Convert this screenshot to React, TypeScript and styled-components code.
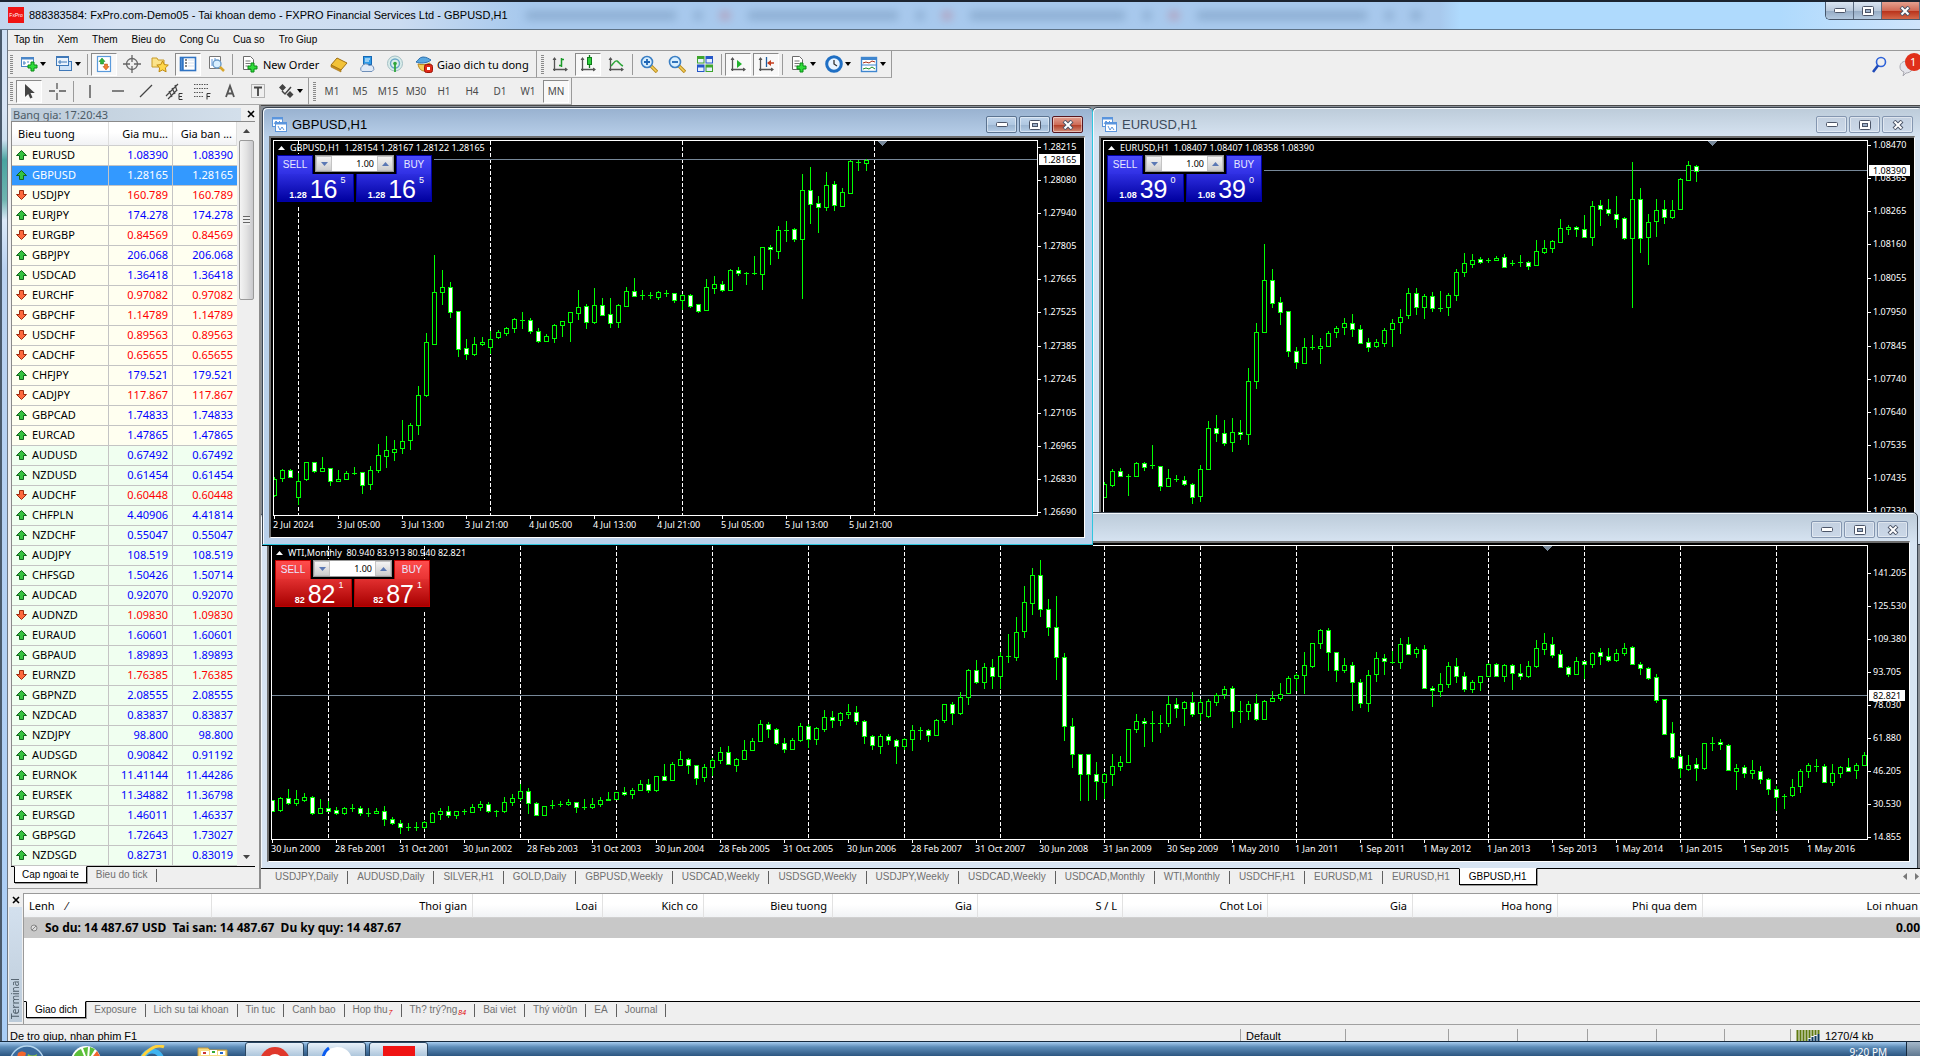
import React from "react";
import styled, { createGlobalStyle, css } from "styled-components";

const SANS = '"Liberation Sans", Arial, sans-serif';
const UI = '"Noto Sans", "Open Sans", sans-serif';

const Global = createGlobalStyle`
  * { box-sizing: border-box; }
  html, body { margin: 0; padding: 0; background: #fff; }
  body { font-family: ${SANS}; font-size: 10px; color: #000; }
  button, input { font: inherit; color: inherit; margin: 0; padding: 0; border: 0; background: none; border-radius: 0; }
  button { cursor: default; }
  svg { display: block; flex: none; }
`;

/* ---------- data ---------- */

type Quote = [string, string, string, boolean];

const quotes: Quote[] = [
  ["EURUSD", "1.08390", "1.08390", true],
  ["GBPUSD", "1.28165", "1.28165", true],
  ["USDJPY", "160.789", "160.789", false],
  ["EURJPY", "174.278", "174.278", true],
  ["EURGBP", "0.84569", "0.84569", false],
  ["GBPJPY", "206.068", "206.068", true],
  ["USDCAD", "1.36418", "1.36418", true],
  ["EURCHF", "0.97082", "0.97082", false],
  ["GBPCHF", "1.14789", "1.14789", false],
  ["USDCHF", "0.89563", "0.89563", false],
  ["CADCHF", "0.65655", "0.65655", false],
  ["CHFJPY", "179.521", "179.521", true],
  ["CADJPY", "117.867", "117.867", false],
  ["GBPCAD", "1.74833", "1.74833", true],
  ["EURCAD", "1.47865", "1.47865", true],
  ["AUDUSD", "0.67492", "0.67492", true],
  ["NZDUSD", "0.61454", "0.61454", true],
  ["AUDCHF", "0.60448", "0.60448", false],
  ["CHFPLN", "4.40906", "4.41814", true],
  ["NZDCHF", "0.55047", "0.55047", true],
  ["AUDJPY", "108.519", "108.519", true],
  ["CHFSGD", "1.50426", "1.50714", true],
  ["AUDCAD", "0.92070", "0.92070", true],
  ["AUDNZD", "1.09830", "1.09830", false],
  ["EURAUD", "1.60601", "1.60601", true],
  ["GBPAUD", "1.89893", "1.89893", true],
  ["EURNZD", "1.76385", "1.76385", false],
  ["GBPNZD", "2.08555", "2.08555", true],
  ["NZDCAD", "0.83837", "0.83837", true],
  ["NZDJPY", "98.800", "98.800", true],
  ["AUDSGD", "0.90842", "0.91192", true],
  ["EURNOK", "11.41144", "11.44286", true],
  ["EURSEK", "11.34882", "11.36798", true],
  ["EURSGD", "1.46011", "1.46337", true],
  ["GBPSGD", "1.72643", "1.73027", true],
  ["NZDSGD", "0.82731", "0.83019", true],
];

/* Each bar: high, low, open, close, measured down from the top of the plot. */
const gbpusd = `337 357 355 339,329 342 338 330,329 337 330 337,333 365 357 341,322 341 339 322,322 333 322 331,317 331 331 328,
328 346 328 341,330 341 341 339,331 339 339 333,327 335 333 333,332 354 332 345,326 350 344 330,304 333 330 315,296 328 316 310,
300 321 312 309,280 314 308 301,283 310 300 285,246 295 285 255,193 257 255 202,115 204 204 152,130 165 152 147,142 178 147 172,
171 217 171 209,199 220 208 214,197 216 214 204,197 206 204 202,191 214 207 199,190 199 197 192,187 196 193 188,178 193 188 179,
172 189 180 180,178 194 180 191,188 203 191 201,194 201 201 196,184 203 198 185,181 197 185 181,172 202 182 172,150 180 173 167,
164 189 166 182,148 184 182 165,158 176 165 175,158 188 174 183,164 188 182 165,147 167 166 151,138 157 151 156,150 160 155 155,
152 159 155 155,151 160 157 152,150 157 153 153,153 163 153 160,154 170 160 155,154 168 155 166,164 173 164 171,139 170 170 147,
136 154 148 144,141 152 144 150,129 151 150 130,127 136 130 133,132 145 133 133,116 135 133 133,107 150 134 107,105 125 107 109,
86 119 111 90,81 102 90 90,88 102 89 99,34 159 99 50,27 84 50 64,56 93 63 67,32 71 67 45,41 71 44 65,48 66 66 52,20 53 53 21,
20 31 22 22,19 31 23 20`;

const eurusd = `342 358 357 344,329 347 345 331,328 336 331 336,334 356 336 336,322 336 336 323,322 331 323 327,305 329 325 325,
326 351 326 346,329 346 346 338,335 342 339 339,336 346 340 344,343 364 344 357,325 362 356 329,281 329 329 288,275 302 288 293,
280 306 293 303,278 312 302 292,280 300 292 294,228 305 294 241,183 249 241 192,104 193 192 140,129 168 140 163,157 185 162 172,
171 217 171 211,207 229 211 222,198 224 223 207,195 210 207 207,198 224 208 206,191 206 206 193,186 198 192 188,178 195 187 183,
174 197 183 189,185 203 189 203,198 212 202 207,199 208 206 202,188 207 203 190,179 207 189 183,169 194 182 177,148 179 175 153,
148 175 153 167,154 179 167 156,152 172 156 168,151 172 168 168,153 176 167 155,129 161 155 132,113 137 132 123,114 128 124 120,
117 124 119 122,118 123 120 120,116 121 120 118,114 127 117 127,120 126 123 123,115 127 122 122,121 130 122 126,100 126 125 111,
100 114 112 108,100 113 108 101,79 102 102 88,85 95 89 87,86 97 87 89,75 98 89 97,61 106 97 66,60 86 65 69,59 76 69 73,56 88 74 79,
77 100 78 98,22 168 98 59,48 113 59 98,74 125 97 82,59 97 81 70,60 84 69 77,60 79 77 70,38 70 69 39,21 41 40 25,25 42 26 31`;

const wti = `255 266 255 266,252 267 265 253,244 260 253 258,245 261 258 254,248 257 255 252,251 270 252 268,254 268 268 263,
256 267 263 266,262 270 265 268,262 270 268 263,259 267 263 263,261 271 263 268,263 272 268 268,263 269 268 266,261 281 266 274,
272 280 274 278,275 289 278 282,278 286 282 282,277 286 282 282,276 284 282 277,267 278 277 268,263 275 269 266,261 273 266 270,
266 274 270 266,264 270 266 266,259 268 267 262,256 266 262 259,257 268 259 266,265 272 266 266,252 268 266 257,249 261 257 253,
239 256 253 246,243 269 246 258,257 271 258 270,261 270 270 261,255 264 260 260,256 262 259 259,254 261 259 257,257 268 257 262,
254 265 262 262,253 264 262 259,252 262 259 255,247 256 255 254,247 255 254 247,242 251 247 249,243 254 249 245,235 246 245 239,
234 248 239 245,231 247 245 231,219 236 231 235,217 236 235 219,206 221 220 214,213 229 214 220,220 240 220 233,219 237 232 222,
213 231 222 215,202 219 215 207,201 220 207 219,213 227 220 214,195 215 214 205,193 206 205 196,175 197 196 179,177 193 179 184,
183 200 184 198,193 208 198 204,193 205 204 195,178 197 195 181,179 203 181 194,182 200 194 183,165 187 184 172,166 183 172 175,
167 181 175 168,159 174 169 167,161 180 167 176,175 199 176 191,190 205 191 200,189 209 201 191,189 200 191 195,194 219 195 201,
193 205 201 194,180 206 194 185,182 195 185 185,184 197 185 190,174 190 190 175,159 178 175 159,157 180 159 168,147 170 168 152,
124 160 152 125,115 139 125 137,118 144 137 122,114 144 122 131,107 144 131 111,89 118 111 111,72 116 112 87,41 93 86 57,
23 70 58 30,15 72 30 64,54 91 64 82,51 135 82 112,108 196 112 181,173 223 181 209,209 256 209 229,209 256 209 229,217 255 229 236,
228 254 237 229,209 241 229 221,211 226 221 217,184 218 217 184,169 188 184 176,173 202 176 178,166 197 178 178,170 188 178 178,
151 182 178 159,153 173 159 163,156 181 163 157,147 172 157 169,154 176 168 157,154 173 171 156,148 161 157 150,141 154 149 144,
141 183 143 166,156 178 166 166,156 175 166 159,149 176 158 174,155 174 174 156,146 157 156 153,138 156 153 149,131 149 148 133,
128 146 133 130,107 149 130 120,98 123 121 98,84 104 98 85,83 126 85 107,107 137 107 125,113 128 125 120,117 166 120 137,
134 163 137 158,125 167 158 130,107 137 129 113,109 130 113 116,106 119 117 117,93 124 117 99,92 110 99 109,102 113 108 104,
100 144 104 143,141 162 143 145,128 152 146 139,117 143 139 121,113 138 121 131,127 147 131 144,135 148 144 137,131 146 137 131,
118 132 131 119,118 132 119 131,119 137 131 120,119 145 120 128,119 135 128 131,116 133 131 121,95 123 121 103,88 110 104 98,
92 113 99 110,105 123 109 122,121 132 122 129,112 130 129 116,116 134 116 119,107 123 119 108,103 120 107 111,103 117 111 115,
104 117 115 108,98 111 108 103,101 120 102 119,117 130 119 123,122 135 123 133,129 158 132 155,154 190 154 189,177 214 188 212,
209 233 211 223,210 226 224 220,213 236 219 223,198 225 223 198,192 206 198 198,194 205 197 199,199 226 200 225,219 245 226 223,
220 233 222 228,215 234 228 225,221 239 226 234,233 250 234 244,241 266 244 252,249 264 251 251,234 252 250 242,224 248 241 226,
218 233 226 220,214 227 221 221,219 238 221 237,219 241 237 228,221 233 228 222,213 226 222 226,218 234 225 220,207 220 220 210`;

const parseBars = (s: string) => s.split(",").map((b) => b.trim().split(" ").map(Number));

type Level = [string, number];

const gbpLevels: Level[] = [
  ["1.28215", 7], ["1.28080", 40], ["1.27940", 73], ["1.27805", 106], ["1.27665", 139], ["1.27525", 172],
  ["1.27385", 206], ["1.27245", 239], ["1.27105", 273], ["1.26965", 306], ["1.26830", 339], ["1.26690", 372],
];
const eurLevels: Level[] = [
  ["1.08470", 5], ["1.08365", 38], ["1.08265", 71], ["1.08160", 104], ["1.08055", 138], ["1.07950", 172],
  ["1.07845", 206], ["1.07740", 239], ["1.07640", 272], ["1.07535", 305], ["1.07435", 338], ["1.07330", 371],
];
const wtiLevels: Level[] = [
  ["141.205", 28], ["125.530", 61], ["109.380", 94], ["93.705", 127], ["78.030", 160],
  ["61.880", 193], ["46.205", 226], ["30.530", 259], ["14.855", 292],
];
const gbpDates = ["2 Jul 2024", "3 Jul 05:00", "3 Jul 13:00", "3 Jul 21:00", "4 Jul 05:00", "4 Jul 13:00", "4 Jul 21:00", "5 Jul 05:00", "5 Jul 13:00", "5 Jul 21:00"];
const wtiDates = [
  "30 Jun 2000", "28 Feb 2001", "31 Oct 2001", "30 Jun 2002", "28 Feb 2003", "31 Oct 2003", "30 Jun 2004", "28 Feb 2005",
  "31 Oct 2005", "30 Jun 2006", "28 Feb 2007", "31 Oct 2007", "30 Jun 2008", "31 Jan 2009", "30 Sep 2009", "1 May 2010",
  "1 Jan 2011", "1 Sep 2011", "1 May 2012", "1 Jan 2013", "1 Sep 2013", "1 May 2014", "1 Jan 2015", "1 Sep 2015", "1 May 2016",
];

/* ---------- shell ---------- */

const Page = styled.div`
  height: 100vh;
  display: flex;
  flex-direction: column;
  overflow: hidden;
  padding-right: 16px;
  background: #fff;
`;
const AppFrame = styled.div`
  flex: 1;
  min-height: 0;
  display: flex;
  flex-direction: column;
  background: #efefef;
`;
const TitleBar = styled.header`
  height: 30px;
  flex: none;
  display: flex;
  align-items: flex-start;
  border-top: 2px solid #1c2430;
  border-bottom: 1px solid #5d7286;
  background: linear-gradient(90deg, #c3d6ee 0, #d5e2f3 120px, #cbdcf1 400px, #a8c9ed 520px, #a8c9ed 1440px, #afdafd 1460px, #afdafd 1780px, #cfe4fb 1920px);
`;
const Logo = styled.span`
  width: 16px;
  height: 16px;
  margin: 5px 5px 0 8px;
  background: #f01414;
  color: #fff;
  font-size: 5px;
  line-height: 16px;
  text-align: center;
`;
const AppTitle = styled.h1`
  margin: 0;
  font-size: 11px;
  font-weight: 400;
  line-height: 27px;
  white-space: nowrap;
`;
const GlassTabs = styled.div`
  flex: 1;
  display: flex;
  align-items: center;
  height: 27px;
  padding-left: 18px;
  gap: 18px;
  filter: blur(4px);
  opacity: 0.35;
`;
const Smear = styled.i<{ $w: number; $c?: string }>`
  width: ${(p) => p.$w}px;
  height: 9px;
  background: ${(p) => p.$c || "#58799e"};
`;
const Controls = styled.div`
  display: flex;
  border: 1px solid #46566a;
  border-top: 0;
  border-right: 0;
  border-radius: 0 0 0 5px;
  overflow: hidden;
`;
const ControlBtn = styled.button<{ $close?: boolean }>`
  width: ${(p) => (p.$close ? 38 : 28)}px;
  height: 17px;
  display: flex;
  align-items: center;
  justify-content: center;
  padding-left: ${(p) => (p.$close ? 8 : 0)}px;
  border-right: 1px solid #5b6b80;
  background: ${(p) =>
    p.$close ? "linear-gradient(#e5a08f, #d06a55 50%, #b83019 52%, #d4684a)" : "linear-gradient(#dbe6f3, #b9c9db 50%, #95abc4 52%, #b4c9df)"};
`;
const Body = styled.div`
  flex: 1;
  min-height: 0;
  display: flex;
`;
const GlassEdge = styled.div`
  flex: none;
  width: 8px;
  border-right: 1px solid #6c7683;
  border-left: 2px solid #4a5a6c;
  background: linear-gradient(#cfe0f5 0, #d7e4f5 80px, #cde0f0 110px, #4aa3a0 130px, #6fb5b0 170px, #dbe8f8 190px, #b9d1f0 240px, #a9cdf6 100%);
`;
const Work = styled.div`
  flex: 1;
  min-width: 0;
  display: flex;
  flex-direction: column;
`;
const MenuBar = styled.nav`
  flex: none;
  height: 21px;
  display: flex;
  align-items: center;
  gap: 14px;
  padding-left: 6px;
  border-bottom: 1px solid #9a9a9a;
  button { line-height: 18px; }
`;

/* ---------- toolbars ---------- */

const ToolRow = styled.div`
  flex: none;
  height: 27px;
  display: flex;
  justify-content: space-between;
`;
const Bars = styled.div`
  display: flex;
`;
const Bar = styled.div`
  display: flex;
  align-items: center;
  gap: 2px;
  padding: 0 2px;
  border-right: 1px solid #9a9a9a;
  border-bottom: 1px solid #a8a8a8;
  & + & { padding-left: 4px; }
`;
const Grip = styled.i`
  width: 3px;
  height: 19px;
  margin-right: 1px;
  background: repeating-linear-gradient(#8a8a8a 0 1px, #efefef 1px 2px);
`;
const Sep = styled.i`
  width: 1px;
  height: 21px;
  margin: 0 1px;
  background: #9a9a9a;
`;
const ToolBtn = styled.button<{ $on?: boolean; $w?: number }>`
  flex: none;
  width: ${(p) => (p.$w ? p.$w + "px" : "26px")};
  height: 23px;
  display: flex;
  align-items: center;
  justify-content: center;
  gap: 2px;
  font: 10px ${UI};
  color: #4a4a4a;
  white-space: nowrap;
  border: 1px solid transparent;
  ${(p) =>
    p.$on &&
    css`
      border-color: #8a8a8a #fff #fff #8a8a8a;
      background: #f8f8f8;
    `}
`;
const LabelBtn = styled(ToolBtn)`
  justify-content: flex-start;
  padding-left: 4px;
  font-size: 11px;
  color: #000;
  gap: 4px;
`;
const Corner = styled.div`
  display: flex;
  align-items: center;
  gap: 12px;
`;

/* ---------- market watch ---------- */

const Main = styled.div`
  flex: 1;
  min-height: 0;
  display: flex;
`;
const Watch = styled.section`
  flex: none;
  width: 253px;
  display: flex;
  flex-direction: column;
  padding: 2px 4px 0 3px;
  border-right: 2px solid #8c8c8c;
  border-bottom: 1px solid #a0a0a0;
`;
const PanelTitle = styled.header`
  flex: none;
  height: 14px;
  display: flex;
  align-items: center;
  justify-content: space-between;
  color: #4b5a66;
  h2 { flex: 1; margin: 0 6px 0 0; padding-left: 2px; font: 11px/13px ${UI}; background: linear-gradient(90deg, #bccbd9, #d3dfeb); }
`;
const WatchBody = styled.div`
  flex: 1;
  min-height: 0;
  display: flex;
  border: solid #8a8a8a;
  border-width: 1px 0 0 1px;
  background: #fff;
  overflow: hidden;
`;
const QuoteTable = styled.table`
  flex: 1;
  align-self: flex-start;
  border-spacing: 0;
  table-layout: fixed;
  font: 11px/18px ${UI};
  th {
    height: 24px;
    padding: 0 4px 0 6px;
    font-weight: 400;
    text-align: right;
    white-space: nowrap;
    border-right: 1px solid #dedede;
    border-bottom: 1px solid #cfcfcf;
    background: linear-gradient(#fff 45%, #f1f2f4);
  }
  th:first-child { text-align: left; }
  td { height: 20px; padding: 0 4px 1px; text-align: right; border: solid #c4c4c4; border-width: 0 1px 1px 0; }
  td:last-child { border-right: 0; }
`;
const QuoteRow = styled.tr<{ $up: boolean; $sel: boolean; $late: boolean }>`
  background: ${(p) => (p.$sel ? "#3399ff" : p.$late ? "#f0fff0" : "#fffff0")};
  color: ${(p) => (p.$sel ? "#fff" : p.$up ? "#0000ff" : "#ff0000")};
`;
const Sym = styled.div<{ $sel: boolean }>`
  display: flex;
  align-items: center;
  gap: 5px;
  color: ${(p) => (p.$sel ? "#fff" : "#000")};
`;
const Scroll = styled.div`
  flex: none;
  width: 18px;
  display: flex;
  flex-direction: column;
  align-items: center;
  background: #efefef;
`;
const ScrollEnd = styled.button`
  width: 16px;
  height: 18px;
  display: flex;
  align-items: center;
  justify-content: center;
`;
const Thumb = styled.div`
  width: 15px;
  height: 160px;
  display: flex;
  align-items: center;
  justify-content: center;
  border: 1px solid #9a9a9a;
  border-radius: 2px;
  background: linear-gradient(90deg, #f4f4f4, #e2e2e2 50%, #c8c8cc);
  i { width: 7px; height: 9px; background: repeating-linear-gradient(#666 0 1px, #eee 1px 3px); }
`;
const TabStrip = styled.div<{ $h: number; $lead: number }>`
  flex: none;
  height: ${(p) => p.$h}px;
  display: flex;
  align-items: flex-start;
  padding-left: ${(p) => p.$lead}px;
  border-top: 1px solid #000;
  background: #efefef;
`;
const Tab = styled.button<{ $on?: boolean; $pad: number }>`
  flex: none;
  height: 15px;
  display: flex;
  align-items: center;
  padding: 0 ${(p) => p.$pad}px;
  color: #707070;
  white-space: nowrap;
  ${(p) =>
    p.$on &&
    css`
      height: 17px;
      margin-top: -1px;
      color: #000;
      background: #fff;
      border: 1px solid #000;
      border-top-color: #fff;
      box-shadow: 1px 1px 0 #9a9a9a;
    `}
  sub { color: #e00000; font-size: 7px; line-height: 8px; font-style: italic; margin: 6px 0 0 1px; }
`;
const TabSep = styled.i`
  width: 1px;
  height: 13px;
  margin-top: 2px;
  background: #606060;
`;
const Spacer = styled.div`
  flex: 1;
`;

/* ---------- chart windows ---------- */

const MdiSide = styled.div`
  flex: 1;
  min-width: 0;
  display: flex;
  flex-direction: column;
`;
const Mdi = styled.div`
  position: relative;
  flex: 1;
  overflow: hidden;
  border-top: 1px solid #4a4a4a;
  background: #8a8f96;
`;
type Place = { $l: number; $t: number; $w?: number; $r?: number; $h: number; $active?: boolean };
const Win = styled.section<Place>`
  position: absolute;
  left: ${(p) => p.$l}px;
  top: ${(p) => p.$t}px;
  ${(p) => (p.$w ? `width: ${p.$w}px;` : `right: ${p.$r}px;`)}
  height: ${(p) => p.$h}px;
  display: flex;
  flex-direction: column;
  padding: 0 7px 6px 6px;
  border: 1px solid #3a4450;
  border-radius: 5px 5px 0 0;
  background: ${(p) => (p.$active ? "linear-gradient(#98b1cf, #b9d0ea 30px)" : "linear-gradient(#bccbd9, #d7e4f2 30px)")};
  box-shadow: inset 1px 1px 0 #f4f8fc;
  ${(p) => p.$active && "border-right-color: #2fc6de; border-bottom-color: #2fc6de; box-shadow: inset 1px 1px 0 #f4f8fc, 0 1px 0 #000;"}
`;
const WinHead = styled.header<{ $active?: boolean }>`
  flex: none;
  height: 28px;
  display: flex;
  align-items: center;
  gap: 5px;
  padding: 5px 2px 0 3px;
  h2 { flex: 1; margin: 0; font-size: 13px; font-weight: 400; line-height: 20px; color: ${(p) => (p.$active ? "#000" : "#3c4a5a")}; }
`;
const WinBtn = styled.button<{ $tone: "blue" | "red" | "idle" }>`
  width: 31px;
  height: 17px;
  margin-left: -3px;
  display: flex;
  align-items: center;
  justify-content: center;
  border: 1px solid ${(p) => (p.$tone === "red" ? "#571620" : p.$tone === "blue" ? "#5b7390" : "#8496b0")};
  border-radius: 2px;
  box-shadow: inset 0 0 0 1px rgba(255, 255, 255, 0.45);
  background: ${(p) =>
    p.$tone === "red"
      ? "linear-gradient(#e2a193, #cf6d59 50%, #b23a23 52%, #d38d78)"
      : p.$tone === "blue"
      ? "linear-gradient(#c2d6ec, #b0c8e2 50%, #9ab4d0 52%, #b5cde6)"
      : "linear-gradient(#c3d0e0, #cbd8e8)"};
`;
const Content = styled.div`
  flex: 1;
  min-height: 0;
  display: grid;
  grid-template-columns: 1fr auto;
  grid-template-rows: minmax(0, 1fr) 21px;
  padding: 2px 0 0 2px;
  border: solid;
  border-width: 2px 1px 1px 2px;
  border-color: #6e6e6e #fff #fff #6e6e6e;
  background: #000;
`;
const Plot = styled.div`
  position: relative;
  min-width: 0;
  overflow: hidden;
  border: 1px solid #fff;
`;
const Caption = styled.div`
  position: absolute;
  left: 4px;
  top: 0;
  display: flex;
  align-items: center;
  gap: 5px;
  color: #fff;
  font: 9px/14px ${UI};
  white-space: pre;
`;
const Deal = styled.div`
  position: absolute;
  left: 0;
  top: 13px;
  width: 160px;
  height: 52px;
  display: grid;
  grid-template-columns: 36px minmax(0, 1fr) 36px;
  grid-template-rows: 19px 28px;
  padding: 1px 2px 0 3px;
  background: #000;
`;
type Tone = { $red?: boolean };
const DealTab = styled.button<Tone>`
  border: 1px solid ${(p) => (p.$red ? "#c00000" : "#0000a8")};
  border-bottom: 0;
  color: #e8e8ff;
  font-size: 10px;
  line-height: 16px;
  background: ${(p) => (p.$red ? "linear-gradient(#ff4c4c, #e83434)" : "linear-gradient(#4a4afc, #3030e4)")};
`;
const Lots = styled.div`
  display: flex;
  min-width: 0;
  margin: 0 2px 2px;
  border: 1px solid #999;
  background: #fff;
  button { flex: none; width: 16px; display: flex; align-items: center; justify-content: center; background: linear-gradient(#f4f4f4, #cfcfcf); border: 1px solid #c4c4c4; }
  input { flex: 1; width: 20px; min-width: 0; padding-right: 3px; text-align: right; color: #000; font: 9px/15px ${UI}; }
`;
const Quotes = styled.div`
  grid-column: 1 / -1;
  display: flex;
  gap: 2px;
`;
const QuoteBox = styled.button<Tone>`
  flex: 1;
  display: flex;
  align-items: flex-end;
  justify-content: flex-end;
  gap: 3px;
  padding: 0 7px 0 0;
  color: #fff;
  border: 1px solid ${(p) => (p.$red ? "#c00000" : "#0000a8")};
  border-top: 0;
  background: ${(p) => (p.$red ? "linear-gradient(#e23030, #a80000)" : "linear-gradient(#2e2ee0, #0000a0)")};
  small { font-size: 9px; line-height: 11px; font-weight: 700; }
  b { font-size: 25px; line-height: 24px; font-weight: 400; }
  sup { align-self: flex-start; font-size: 9px; line-height: 12px; }
`;
const ScaleSvg = styled.svg<{ $w: number }>`
  width: ${(p) => p.$w}px;
  height: 100%;
  overflow: visible;
  font: 9px ${UI};
`;
const DateSvg = styled.svg`
  width: 100%;
  height: 21px;
  grid-column: 1 / -1;
  font: 9px ${UI};
`;
const PlotSvg = styled.svg`
  width: 100%;
  height: 100%;
`;

/* ---------- terminal ---------- */

const Terminal = styled.section`
  flex: none;
  height: 136px;
  display: flex;
  padding-top: 4px;
  border-bottom: 1px solid #a0a0a0;
`;
const TermSide = styled.div`
  flex: none;
  width: 15px;
  display: flex;
  flex-direction: column;
  align-items: center;
  button { height: 14px; }
  h2 {
    flex: 1;
    width: 13px;
    margin: 0 0 2px;
    padding-top: 3px;
    writing-mode: vertical-rl;
    transform: rotate(180deg);
    font: 10px/13px ${UI};
    color: #4b5a66;
    background: linear-gradient(#bccbd9, #d3e0ee);
  }
`;
const TermMain = styled.div`
  flex: 1;
  min-width: 0;
  display: flex;
  flex-direction: column;
  border: solid #9a9a9a;
  border-width: 1px 0 0 1px;
  background: #fff;
`;
const TermTable = styled.table`
  width: 100%;
  border-spacing: 0;
  table-layout: fixed;
  font: 11px/18px ${UI};
  th { height: 24px; padding: 0 5px; font-weight: 400; text-align: right; white-space: nowrap; border-right: 1px solid #e2e2e2; border-bottom: 1px solid #d0d0d0; background: linear-gradient(#fff 45%, #f1f3f5); }
  th:first-child { text-align: left; }
  th:last-child { padding-right: 2px; border-right: 0; }
  td { height: 20px; padding: 0; font-size: 12px; font-weight: 700; background: #c8c8c8; white-space: pre; }
  td:last-child { text-align: right; }
`;
const Balance = styled.div`
  display: flex;
  align-items: center;
  gap: 7px;
  padding-left: 6px;
`;
const Status = styled.footer`
  flex: none;
  height: 16px;
  display: flex;
  overflow: hidden;
  font-size: 11px;
  line-height: 23px;
  white-space: nowrap;
`;
const StatusCell = styled.span<{ $w?: number }>`
  ${(p) => (p.$w ? `width: ${p.$w}px; border-left: 1px solid #a0a0a0; margin-top: 4px; line-height: 15px;` : "flex: 1;")}
  display: flex;
  gap: 5px;
  padding-left: ${(p) => (p.$w ? 5 : 2)}px;
`;
const Taskbar = styled.footer`
  flex: none;
  height: 15px;
  display: flex;
  overflow: hidden;
  padding-left: 6px;
  border-top: 1px solid #16293d;
  background: linear-gradient(#a8cdf0, #5d8cb8 5px, #2c5681 14px);
`;
const Task = styled.button<{ $open?: boolean; $w: number }>`
  width: ${(p) => p.$w}px;
  height: 30px;
  display: flex;
  justify-content: center;
  padding-top: 3px;
  margin-right: 3px;
  ${(p) =>
    p.$open &&
    css`
      border: 1px solid #2b4763;
      border-radius: 3px 3px 0 0;
      background: linear-gradient(#e8f1f9, #a9c3da 14px);
    `}
`;
const Clock = styled.time`
  color: #fff;
  margin-right: 19px;
  font: 10px/20px ${UI};
`;
const Peek = styled.button`
  width: 14px;
  border-left: 1px solid #16293d;
  background: linear-gradient(#a5b8ca, #5f7890);
`;

/* ---------- icons ---------- */

type IcoProps = { s?: number; children: React.ReactNode };
const Ico = ({ s = 18, children }: IcoProps) => (
  <svg width={s} height={s} viewBox="0 0 18 18" fill="none" aria-hidden="true">{children}</svg>
);
const Caret = () => <svg width="6" height="4" aria-hidden="true"><path d="M0 0h6L3 4z" fill="#000" /></svg>;
const Plus = ({ x, y }: { x: number; y: number }) => (
  <path d={`M${x} ${y}h3v3h3v3h-3v3h-3v-3h-3v-3h3z`} fill="#2fdc3a" stroke="#0a8a16" strokeWidth="1" />
);
const Axis = () => (
  <>
    <path d="M3.500 3v13M2 14.500h14" stroke="#555" strokeWidth="1.300" />
    <path d="M1.500 5l2-3 2 3zM14 12.500l3 2-3 2z" fill="#555" />
  </>
);
const Minus = () => <svg width="12" height="6" aria-hidden="true"><rect x="0.500" y="0.500" width="11" height="4" rx="1" fill="#fff" stroke="#4c5568" /></svg>;
const Square = () => (
  <svg width="12" height="10" aria-hidden="true"><rect x="0.500" y="0.500" width="11" height="9" rx="1" fill="#fff" stroke="#4c5568" /><rect x="3.500" y="3.500" width="5" height="3" fill="#9fb2ca" stroke="#4c5568" /></svg>
);
const Cross = () => (
  <svg width="12" height="10" aria-hidden="true"><path d="M2 1l8 8M10 1L2 9" stroke="#4c5568" strokeWidth="4" /><path d="M2.500 1.500l7 7M9.500 1.500l-7 7" stroke="#fff" strokeWidth="2" /></svg>
);
const SmallX = () => <svg width="8" height="8" aria-hidden="true"><path d="M1 1l6 6M7 1L1 7" stroke="#000" strokeWidth="1.600" /></svg>;
const Magnifier = ({ plus }: { plus?: boolean }) => (
  <Ico>
    <path d="M11 11l6 6" stroke="#b98a1c" strokeWidth="3.400" /><path d="M11 11l5.500 5.500" stroke="#f5d05a" strokeWidth="1.600" />
    <circle cx="7" cy="7" r="5.500" fill="#d8efff" stroke="#3b7fc4" strokeWidth="1.600" />
    <path d={plus ? "M4 7h6M7 4v6" : "M4 7h6"} stroke="#1f66b5" strokeWidth="1.800" />
  </Ico>
);
const DocPlus = () => (
  <Ico>
    <path d="M2.500 1.500h7l3 3v10h-10z" fill="#fff" stroke="#6b6b6b" />
    <path d="M4.500 6h5M4.500 8.500h5M4.500 11h3" stroke="#777" />
    <Plus x={10} y={8} />
  </Ico>
);
const Arrow = ({ up }: { up: boolean }) => (
  <svg width="11" height="10" viewBox="0 0 11 10" aria-hidden="true">
    {up ? <path d="M5.500 0.500l5 5h-3v4h-4v-4h-3z" fill="#35c341" stroke="#11661b" /> : <path d="M5.500 9.500l5-5h-3v-4h-4v4h-3z" fill="#ff6a3c" stroke="#9c2c10" />}
  </svg>
);
const WinIcon = () => (
  <svg width="15" height="15" viewBox="0 0 15 15" aria-hidden="true">
    <rect x="0.500" y="0.500" width="10" height="9" fill="#fff" stroke="#5a95dd" /><path d="M0 1.500h11" stroke="#5a95dd" strokeWidth="2" /><path d="M2 7l2-3 2 2 2-2" stroke="#5a95dd" fill="none" />
    <rect x="3.500" y="5.500" width="11" height="9" fill="#fff" stroke="#5a95dd" /><path d="M3 6.500h12" stroke="#5a95dd" strokeWidth="2" /><path d="M6 9l2 4 2-3 2 3" stroke="#5a95dd" fill="none" />
  </svg>
);
const Tri = ({ up, c = "#5a78b4" }: { up?: boolean; c?: string }) => (
  <svg width="7" height="4" viewBox="0 0 7 4" aria-hidden="true"><path d={up ? "M0 4h7L3.500 0z" : "M0 0h7L3.500 4z"} fill={c} /></svg>
);

/* ---------- parts ---------- */

const Candles = React.memo(({ src }: { src: string }) => (
  <g>
    {parseBars(src).map(([h, l, o, c], i) => {
      const x = i * 8;
      const top = Math.min(o, c);
      const tall = Math.abs(o - c);
      return (
        <g key={i}>
          <rect x={x} y={h} width={1} height={l - h} fill="#00ff00" />
          <rect x={x - 2} y={top} width={5} height={tall + 1} fill="#00ff00" />
          {tall > 1 && <rect x={x - 1} y={top + 1} width={3} height={tall - 1} fill={c < o ? "#000" : "#fff"} />}
        </g>
      );
    })}
  </g>
));

type ChartProps = {
  id: string;
  place: Place;
  title?: string;
  caption: string;
  src: string;
  levels: Level[];
  price: Level;
  dates: string[];
  breaks: number[];
  marker: number;
  scaleWidth: number;
  red?: boolean;
  sell: [string, string, string];
  buy: [string, string, string];
};

const ChartWindow = (p: ChartProps) => {
  const tone = p.place.$active ? "blue" : "idle";
  return (
    <Win {...p.place}>
      <WinHead $active={p.place.$active}>
        {p.title && <WinIcon />}
        <h2>{p.title}</h2>
        <WinBtn $tone={tone} aria-label="Minimize"><Minus /></WinBtn>
        <WinBtn $tone={tone} aria-label="Maximize"><Square /></WinBtn>
        <WinBtn $tone={p.place.$active ? "red" : "idle"} aria-label="Close"><Cross /></WinBtn>
      </WinHead>
      <Content>
        <Plot>
          <PlotSvg shapeRendering="crispEdges">
            <g transform="translate(0,-1)">
              {p.breaks.map((x) => (
                <line key={x} x1={x + 0.5} x2={x + 0.5} y1={1} y2={400} stroke="#fff" strokeDasharray="4 2" />
              ))}
              <rect x={0} y={p.price[1]} width="100%" height={1} fill="#778899" />
              <Candles src={p.src} />
              <path d={`M${p.marker - 5} 1h10l-5 5z`} fill="#778899" />
            </g>
          </PlotSvg>
          <Caption><Tri up c="#fff" /> {p.caption}</Caption>
          <Deal>
            <DealTab $red={p.red}>SELL</DealTab>
            <Lots>
              <button aria-label="Decrease volume"><Tri /></button>
              <input aria-label={`${p.id} volume`} defaultValue="1.00" />
              <button aria-label="Increase volume"><Tri up /></button>
            </Lots>
            <DealTab $red={p.red}>BUY</DealTab>
            <Quotes>
              {[p.sell, p.buy].map(([a, b, c], i) => (
                <QuoteBox key={i} $red={p.red}><small>{a}</small><b>{b}</b><sup>{c}</sup></QuoteBox>
              ))}
            </Quotes>
          </Deal>
        </Plot>
        <ScaleSvg $w={p.scaleWidth}>
          {p.levels.map(([t, y]) => (
            <g key={t}>
              <rect x={0} y={y} width={3} height={1} fill="#fff" />
              <text x={5} y={y + 3} fill="#fff">{t}</text>
            </g>
          ))}
          <rect x={1} y={p.price[1] - 5} width={p.scaleWidth - 5} height={11} fill="#fff" />
          <text x={5} y={p.price[1] + 4} fill="#000">{p.price[0]}</text>
        </ScaleSvg>
        <DateSvg>
          {p.dates.map((d, i) => (
            <g key={d}>
              <rect x={1 + i * 64} y={0} width={1} height={3} fill="#fff" />
              <text x={i * 64} y={12} fill="#fff">{d}</text>
            </g>
          ))}
        </DateSvg>
      </Content>
    </Win>
  );
};

const chartTabs = [
  "USDJPY,Daily", "AUDUSD,Daily", "SILVER,H1", "GOLD,Daily", "GBPUSD,Weekly", "USDCAD,Weekly", "USDSGD,Weekly", "USDJPY,Weekly",
  "USDCAD,Weekly", "USDCAD,Monthly", "WTI,Monthly", "USDCHF,H1", "EURUSD,M1", "EURUSD,H1",
];
const columns: [string, number | undefined][] = [
  ["Thoi gian", 261], ["Loai", 130], ["Kich co", 101], ["Bieu tuong", 129], ["Gia", 145], ["S / L", 145],
  ["Chot Loi", 145], ["Gia", 145], ["Hoa hong", 145], ["Phi qua dem", 145], ["Loi nhuan", undefined],
];
const termTabs: [string, string?][] = [
  ["Exposure"], ["Lich su tai khoan"], ["Tin tuc"], ["Canh bao"], ["Hop thu", "7"], ["Th? trý?ng", "84"], ["Bai viet"], ["Thý viờũn"], ["EA"], ["Journal"],
];

const Toolbars = () => (
  <>
    <ToolRow>
      <Bars>
        <Bar>
          <Grip />
          <ToolBtn $w={33} aria-label="New chart"><Ico><rect x="1.500" y="2.500" width="12" height="9" fill="#fff" stroke="#4a86c8" /><path d="M1 3.500h13" stroke="#4a86c8" strokeWidth="2" /><path d="M4 6v4M3 8h3M8 6v2" stroke="#4a86c8" /><Plus x={11} y={7} /></Ico><Caret /></ToolBtn>
          <ToolBtn $w={33} aria-label="Profiles"><Ico><rect x="4.500" y="6.500" width="12" height="9" fill="#cfe3f7" stroke="#3f78b8" /><rect x="1.500" y="1.500" width="12" height="9" fill="#eaf3fc" stroke="#3f78b8" /><path d="M1 2.500h13M3 7h9M5 5v4" stroke="#3f78b8" /></Ico><Caret /></ToolBtn>
          <Sep />
          <ToolBtn $on aria-label="Market watch"><Ico><rect x="2.500" y="1.500" width="13" height="15" fill="#fff" stroke="#5b9bdc" strokeWidth="1.200" /><path d="M7 3l3 3.500H8.500V9h-3V6.500H4z" fill="#2fb63b" stroke="#0f7a1c" strokeWidth=".5" /><path d="M11 15l3-3.500h-1.500V9h-3v2.500H8z" fill="#f2822c" stroke="#b04010" strokeWidth=".5" /></Ico></ToolBtn>
          <ToolBtn aria-label="Data window"><Ico><circle cx="9" cy="9" r="5.500" stroke="#666" strokeWidth="1.300" /><path d="M9 0v7M9 11v7M0 9h7M11 9h7" stroke="#666" strokeWidth="1.300" /></Ico></ToolBtn>
          <ToolBtn aria-label="Navigator"><Ico><path d="M1 3h5l1 2h6v7H1z" fill="#fbe38a" stroke="#c79a26" /><path d="M11.500 6l1.800 3.600 4 .5-2.900 2.700.7 4-3.600-1.900L8 16.800l.6-4-2.800-2.700 4-.5z" fill="#ffd84a" stroke="#c08a10" /></Ico></ToolBtn>
          <ToolBtn $on aria-label="Terminal"><Ico><rect x="1.500" y="2.500" width="15" height="13" fill="#fff" stroke="#2f74c4" strokeWidth="1.600" /><path d="M3.500 3v12" stroke="#2f74c4" strokeWidth="2.500" /><path d="M6 5h2M6 8h2M6 11h2" stroke="#111" /><path d="M9 5h6M9 8h6M9 11h6" stroke="#d3dfee" /></Ico></ToolBtn>
          <ToolBtn aria-label="Strategy tester"><Ico><path d="M2.500 1.500h11v12h-11z" fill="#fff" stroke="#777" /><path d="M5 4v7M8 3v5" stroke="#5a95dd" /><circle cx="10" cy="9" r="4" fill="#d8efff" stroke="#6a9bc8" strokeWidth="1.400" /><path d="M13 12l4 4" stroke="#d8a62c" strokeWidth="2.500" /></Ico></ToolBtn>
          <Sep />
          <LabelBtn $w={88}><DocPlus />New Order</LabelBtn>
          <ToolBtn aria-label="MetaEditor"><Ico><path d="M1 10l6-7 10 5-6 7z" fill="#f2c238" stroke="#a06f10" /><path d="M1 10l10 5v2L1 12z" fill="#c98f1c" stroke="#a06f10" strokeWidth=".6" /></Ico></ToolBtn>
          <ToolBtn aria-label="Community"><Ico><rect x="5.500" y="1.500" width="8" height="8" fill="#2f9be8" stroke="#1668b4" /><path d="M7 4h5M7 6h4" stroke="#fff" /><path d="M4 16.500a3 3 0 010-5 4 4 0 017-1 3.200 3.200 0 013 6z" fill="#dfe9f6" stroke="#6f8fb8" /></Ico></ToolBtn>
          <ToolBtn aria-label="Signals"><Ico><circle cx="9" cy="8.500" r="7.500" fill="#d9ecea" stroke="#a3bfc4" /><circle cx="9" cy="8.500" r="4.500" stroke="#6aa8c8" strokeWidth="1.400" /><circle cx="9" cy="8.500" r="1.800" fill="#2fa63b" /><path d="M9 9v8" stroke="#2fa63b" strokeWidth="1.800" /></Ico></ToolBtn>
          <LabelBtn $w={124}><Ico><path d="M1 7c2-1 3-5 7-5s6 2 8 3c-3 3-11 4-15 2z" fill="#5aa7e0" stroke="#2a6fae" /><path d="M3 9c1 5 3 7 7 7s5-3 5-8c-4 2-8 2-12 1z" fill="#f4cf5c" stroke="#b8871c" /><rect x="9.500" y="9.500" width="8" height="8" rx="2" fill="#e02818" stroke="#9c1408" /><rect x="12" y="12" width="3" height="3" fill="#fff" /></Ico>Giao dich tu dong</LabelBtn>
        </Bar>
        <Bar>
          <Grip />
          <ToolBtn aria-label="Bar chart"><Ico><Axis /><path d="M10.500 3v9M8 10.500h2.500M10.500 4.500H13" stroke="#1a9a28" strokeWidth="1.500" /></Ico></ToolBtn>
          <ToolBtn $on aria-label="Candlesticks"><Ico><Axis /><path d="M10.500 0v13" stroke="#107a1c" strokeWidth="1.300" /><rect x="8.500" y="2.500" width="4" height="7" fill="#2fd03c" stroke="#107a1c" /></Ico></ToolBtn>
          <ToolBtn aria-label="Line chart"><Ico><Axis /><path d="M4 11c2-2 4-6 6-5s3 4 6 5" stroke="#2fa63b" strokeWidth="1.500" /></Ico></ToolBtn>
          <Sep />
          <ToolBtn aria-label="Zoom in"><Magnifier plus /></ToolBtn>
          <ToolBtn aria-label="Zoom out"><Magnifier /></ToolBtn>
          <ToolBtn aria-label="Tile windows"><Ico><rect x="1" y="1" width="7.500" height="7.500" fill="#3ea52c" /><rect x="9.500" y="1" width="7.500" height="7.500" fill="#2557c8" /><rect x="1" y="9.500" width="7.500" height="7.500" fill="#2557c8" /><rect x="9.500" y="9.500" width="7.500" height="7.500" fill="#3ea52c" /><path d="M2 4h5.500v3.500H2zM10.500 4H16v3.500h-5.500zM2 12.500h5.500V16H2zM10.500 12.500H16V16h-5.500z" fill="#e6f0ff" /></Ico></ToolBtn>
          <Sep />
          <ToolBtn $on aria-label="Auto scroll"><Ico><Axis /><path d="M8 5l5 4-5 4z" fill="#22b32e" /></Ico></ToolBtn>
          <ToolBtn $on aria-label="Chart shift"><Ico><Axis /><path d="M9.500 2v10" stroke="#1b5da0" strokeWidth="1.300" /><path d="M17 8h-6" stroke="#c43c1c" strokeWidth="1.500" /><path d="M10 8l4-3v6z" fill="#c43c1c" /></Ico></ToolBtn>
          <Sep />
          <ToolBtn $w={33} aria-label="Indicators"><DocPlus /><Caret /></ToolBtn>
          <ToolBtn $w={33} aria-label="Periods"><Ico><circle cx="9" cy="9" r="7.300" fill="#e8f4ff" stroke="#1f6fc4" strokeWidth="3" /><path d="M9 5v4l3 2" stroke="#333" strokeWidth="1.300" /></Ico><Caret /></ToolBtn>
          <ToolBtn $w={33} aria-label="Templates"><Ico><rect x="1.500" y="2.500" width="15" height="14" fill="#fff" stroke="#3f86cf" strokeWidth="1.400" /><path d="M1 3.500h16" stroke="#3f86cf" strokeWidth="3" /><path d="M3 8l3-1 3 1 3-2 3 1" stroke="#a83018" /><path d="M1 10h16" stroke="#3f86cf" /><path d="M3 14l3-1 3 1 3-2 3 2" stroke="#1a8a28" /></Ico><Caret /></ToolBtn>
        </Bar>
      </Bars>
      <Corner>
        <svg width="16" height="18" viewBox="0 0 16 18" aria-hidden="true"><circle cx="10" cy="6" r="4.500" fill="none" stroke="#2e62d8" strokeWidth="1.600" /><path d="M7 9.500L2 16" stroke="#1f4ab8" strokeWidth="2.600" /></svg>
        <svg width="21" height="25" viewBox="0 0 21 25" aria-label="1 notification"><path d="M1 15c0-4 3-6 7-6h6v8c-2 3-5 4-7 4l-3 3 1-4c-3-1-4-3-4-5z" fill="#e4e4ea" stroke="#a8a8b0" /><circle cx="15" cy="10" r="9" fill="#e0301a" /><text x="11" y="14" fill="#fff" fontSize="11" fontFamily="Noto Sans">1</text></svg>
      </Corner>
    </ToolRow>
    <ToolRow>
      <Bars>
        <Bar>
          <Grip />
          <ToolBtn $on aria-label="Cursor"><Ico><path d="M5 2v13l3.200-3 2 4.500 2.300-1-2-4.500h4.300z" fill="#444" /></Ico></ToolBtn>
          <ToolBtn aria-label="Crosshair"><Ico><path d="M9 1v6M9 11v7M1 9h6M11 9h7" stroke="#555" strokeWidth="1.300" /></Ico></ToolBtn>
          <Sep />
          <ToolBtn aria-label="Vertical line"><Ico><path d="M9 3v13" stroke="#444" strokeWidth="1.300" /></Ico></ToolBtn>
          <ToolBtn aria-label="Horizontal line"><Ico><path d="M3 9h12" stroke="#444" strokeWidth="1.300" /></Ico></ToolBtn>
          <ToolBtn aria-label="Trendline"><Ico><path d="M3 15L15 3" stroke="#444" strokeWidth="1.300" /></Ico></ToolBtn>
          <ToolBtn aria-label="Equidistant channel"><Ico><path d="M1 14L13 2M3 17L12 8M4 9l3 6M7 6l3 6M10 3l2 6" stroke="#444" strokeWidth="1.200" /><path d="M17.500 11.500h-3.500v6h3.500M14 14.500h3" stroke="#333" /></Ico></ToolBtn>
          <ToolBtn aria-label="Fibonacci"><Ico><path d="M1 2.500h14M1 6.500h14M1 10.500h10M1 14.500h10" stroke="#555" strokeDasharray="1.500 1" /><path d="M17.500 11.500h-3.500v6M14 14.500h3" stroke="#333" /></Ico></ToolBtn>
          <ToolBtn aria-label="Text"><Ico><path d="M5 15L9 4l4 11M6.500 11.500h5" stroke="#555" strokeWidth="1.800" /></Ico></ToolBtn>
          <ToolBtn aria-label="Text label"><Ico><rect x="2.500" y="2.500" width="13" height="13" stroke="#777" strokeDasharray="1 1" /><path d="M5 5.500h8M9 5.500V14" stroke="#444" strokeWidth="1.800" /></Ico></ToolBtn>
          <ToolBtn $w={33} aria-label="Arrows"><Ico><path d="M5.500 2l3.500 3.500L5.500 9 2 5.500z M13 9l3.500 3.500L13 16l-3.500-3.500z" fill="#444" /><path d="M5 9l3 3 6-7" stroke="#444" strokeWidth="1.500" /></Ico><Caret /></ToolBtn>
        </Bar>
        <Bar>
          <Grip />
          {["M1", "M5", "M15", "M30", "H1", "H4", "D1", "W1", "MN"].map((t) => (
            <ToolBtn key={t} $on={t === "MN"}>{t}</ToolBtn>
          ))}
        </Bar>
      </Bars>
    </ToolRow>
  </>
);

export default function App() {
  return (
    <Page>
      <Global />
      <AppFrame>
        <TitleBar>
          <Logo>FxPro</Logo>
          <AppTitle>888383584: FxPro.com-Demo05 - Tai khoan demo - FXPRO Financial Services Ltd - GBPUSD,H1</AppTitle>
          <GlassTabs aria-hidden="true">
            <Smear $w={150} /><Smear $w={8} />
            <Smear $w={10} $c="#c25a6a" /><Smear $w={150} /><Smear $w={8} />
            <Smear $w={10} $c="#c25a6a" /><Smear $w={155} /><Smear $w={8} />
            <Smear $w={10} $c="#c25a6a" /><Smear $w={170} /><Smear $w={8} /><Smear $w={10} />
          </GlassTabs>
          <Controls>
            <ControlBtn aria-label="Minimize"><Minus /></ControlBtn>
            <ControlBtn aria-label="Maximize"><Square /></ControlBtn>
            <ControlBtn $close aria-label="Close"><Cross /></ControlBtn>
          </Controls>
        </TitleBar>
        <Body>
          <GlassEdge />
          <Work>
            <MenuBar>
              {["Tap tin", "Xem", "Them", "Bieu do", "Cong Cu", "Cua so", "Tro Giup"].map((m) => <button key={m}>{m}</button>)}
            </MenuBar>
            <Toolbars />
            <Main>
              <Watch>
                <PanelTitle>
                  <h2>Bang gia: 17:20:43</h2>
                  <button aria-label="Close panel"><SmallX /></button>
                </PanelTitle>
                <WatchBody>
                  <QuoteTable>
                    <colgroup><col style={{ width: 97 }} /><col style={{ width: 64 }} /><col /></colgroup>
                    <thead><tr><th>Bieu tuong</th><th>Gia mu...</th><th>Gia ban ...</th></tr></thead>
                    <tbody>
                      {quotes.map(([s, bid, ask, up], i) => (
                        <QuoteRow key={s} $up={up} $sel={i === 1} $late={i > 14}>
                          <td><Sym $sel={i === 1}><Arrow up={up} />{s}</Sym></td>
                          <td>{bid}</td>
                          <td>{ask}</td>
                        </QuoteRow>
                      ))}
                    </tbody>
                  </QuoteTable>
                  <Scroll>
                    <ScrollEnd aria-label="Scroll up"><Tri up c="#444" /></ScrollEnd>
                    <Thumb><i /></Thumb>
                    <Spacer />
                    <ScrollEnd aria-label="Scroll down"><Tri c="#444" /></ScrollEnd>
                  </Scroll>
                </WatchBody>
                <TabStrip $h={22} $lead={3}>
                  <Tab $on $pad={7}>Cap ngoai te</Tab>
                  <Tab $pad={9}>Bieu do tick</Tab>
                  <TabSep />
                </TabStrip>
              </Watch>
              <MdiSide>
                <Mdi>
                  <ChartWindow
                    id="EURUSD" title="EURUSD,H1" caption="EURUSD,H1  1.08407 1.08407 1.08358 1.08390"
                    place={{ $l: 831, $t: 1, $r: -3, $h: 438 }}
                    src={eurusd} levels={eurLevels} price={["1.08390", 30]} dates={[]} breaks={[]} marker={608} scaleWidth={46}
                    sell={["1.08", "39", "0"]} buy={["1.08", "39", "0"]}
                  />
                  <ChartWindow
                    id="WTI" caption="WTI,Monthly  80.940 83.913 80.940 82.821"
                    place={{ $l: -1, $t: 406, $r: 2, $h: 357 }}
                    src={wti} levels={wtiLevels} price={["82.821", 150]} dates={wtiDates}
                    breaks={[56, 152, 248, 344, 440, 536, 632, 728, 832, 928, 1024, 1120, 1216, 1312, 1408, 1504]}
                    marker={1275} scaleWidth={41} red sell={["82", "82", "1"]} buy={["82", "87", "1"]}
                  />
                  <ChartWindow
                    id="GBPUSD" title="GBPUSD,H1" caption="GBPUSD,H1  1.28154 1.28167 1.28122 1.28165"
                    place={{ $l: 1, $t: 1, $w: 831, $h: 438, $active: true }}
                    src={gbpusd} levels={gbpLevels} price={["1.28165", 19]} dates={gbpDates} breaks={[24, 216, 408, 600]} marker={608} scaleWidth={46}
                    sell={["1.28", "16", "5"]} buy={["1.28", "16", "5"]}
                  />
                </Mdi>
                <TabStrip $h={21} $lead={5}>
                  {chartTabs.map((t, i) => (
                    <React.Fragment key={i}>
                      <Tab $pad={9}>{t}</Tab>
                      {i < chartTabs.length - 1 && <TabSep />}
                    </React.Fragment>
                  ))}
                  <Tab $on $pad={9}>GBPUSD,H1</Tab>
                  <Spacer />
                  <Tab $pad={7} aria-label="Previous"><svg width="4" height="7" aria-hidden="true"><path d="M4 0v7L0 3.500z" fill="#777" /></svg></Tab>
                  <Tab $pad={1} aria-label="Next"><svg width="4" height="7" aria-hidden="true"><path d="M0 0v7l4-3.500z" fill="#777" /></svg></Tab>
                </TabStrip>
              </MdiSide>
            </Main>
            <Terminal>
              <TermSide>
                <button aria-label="Close terminal"><SmallX /></button>
                <h2>Terminal</h2>
              </TermSide>
              <TermMain>
                <TermTable>
                  <colgroup>
                    <col style={{ width: 188 }} />
                    {columns.map(([, w], i) => <col key={i} style={{ width: w }} />)}
                  </colgroup>
                  <thead>
                    <tr><th>Lenh &nbsp;&nbsp; ⁄</th>{columns.map(([c], i) => <th key={i}>{c}</th>)}</tr>
                  </thead>
                  <tbody>
                    <tr>
                      <td colSpan={11}>
                        <Balance>
                          <svg width="8" height="8" aria-hidden="true"><circle cx="4" cy="4" r="3" fill="#ddd" stroke="#888" /><path d="M2 6l4-4" stroke="#888" /></svg>
                          {"So du: 14 487.67 USD  Tai san: 14 487.67  Du ky quy: 14 487.67"}
                        </Balance>
                      </td>
                      <td>0.00</td>
                    </tr>
                  </tbody>
                </TermTable>
                <Spacer />
                <TabStrip $h={23} $lead={2}>
                  <Tab $on $pad={8}>Giao dich</Tab>
                  {termTabs.map(([t, n]) => (
                    <React.Fragment key={t}>
                      <Tab $pad={8}>{t}{n && <sub>{n}</sub>}</Tab>
                      <TabSep />
                    </React.Fragment>
                  ))}
                </TabStrip>
              </TermMain>
            </Terminal>
            <Status>
              <StatusCell>De tro giup, nhan phim F1</StatusCell>
              <StatusCell $w={105}>Default</StatusCell>
              <StatusCell $w={103} /><StatusCell $w={69} /><StatusCell $w={70} /><StatusCell $w={69} /><StatusCell $w={68} /><StatusCell $w={66} />
              <StatusCell $w={130}>
                <svg width="24" height="14" aria-hidden="true"><path d="M1.500 1v11M4.500 1v11M7.500 1v11M10.500 1v11M13.500 1v8M16.500 1v6M19.500 1v5M22.500 1v4" stroke="#5f7a10" strokeWidth="2" /><path d="M13.500 10v3M16.500 8v5M19.500 7v6M22.500 5v8" stroke="#0d3a60" strokeWidth="2" /></svg>
                1270/4 kb
              </StatusCell>
            </Status>
          </Work>
        </Body>
      </AppFrame>
      <Taskbar>
        <Task $w={42} aria-label="Start"><svg width="38" height="30" viewBox="0 0 38 30" aria-hidden="true"><circle cx="19" cy="18" r="17" fill="#3a6a9c" stroke="#b5d6ee" strokeWidth="1.500" /><path d="M10 8c3-2 5-2 8 0l-2 9H8z" fill="#f2662c" /><path d="M20 9c3 2 6 2 9 0l-2 9c-3 1-6 1-9 0z" fill="#8cc63f" /></svg></Task>
        <Task $w={70} aria-label="Coc Coc"><svg width="32" height="28" viewBox="0 0 32 28" aria-hidden="true"><circle cx="16" cy="16" r="15" fill="#fff" /><path d="M3 16a13 13 0 018-12l5 12zM13 3l5-1-1 12zM20 2l5 2-6 10z" fill="#5cbf3a" /><path d="M27 6l3 5-11 5z" fill="#f2662c" /></svg></Task>
        <Task $w={56} aria-label="Internet Explorer"><svg width="30" height="28" viewBox="0 0 30 28" aria-hidden="true"><circle cx="15" cy="16" r="10" fill="none" stroke="#3fb4f0" strokeWidth="5" /><path d="M2 18C6 8 18-2 27 2" stroke="#ffd23c" strokeWidth="3" fill="none" /></svg></Task>
        <Task $w={59} aria-label="Explorer"><svg width="32" height="28" viewBox="0 0 32 28" aria-hidden="true"><path d="M1 3h10l2 2h17v20H1z" fill="#f6dc84" stroke="#c99c3a" /><path d="M4 6h8v4H4zM13 5h7v5h-7zM21 6h7v4h-7z" fill="#fff" /><path d="M6 7h3v2H6z" fill="#c33" /><path d="M15 6h3v2h-3z" fill="#3a3" /><path d="M23 7h3v2h-3z" fill="#26c" /></svg></Task>
        <Task $open $w={59} aria-label="Chrome"><svg width="32" height="28" viewBox="0 0 32 28" aria-hidden="true"><circle cx="16" cy="16" r="15" fill="#e0382c" /><path d="M16 16L2 12a15 15 0 0014 19z" fill="#3a3" /><path d="M16 16h15a15 15 0 01-12 14z" fill="#fc3" /><circle cx="16" cy="16" r="7" fill="#3a80f0" stroke="#fff" strokeWidth="2" /></svg></Task>
        <Task $open $w={59} aria-label="Zalo"><svg width="32" height="28" viewBox="0 0 32 28" aria-hidden="true"><path d="M16 1c9 0 15 6 15 15s-6 15-15 15S1 25 1 16c0-6 2-11 6-13z" fill="#fff" /><path d="M8 2C2 6 1 14 2 20" stroke="#0a5cf0" strokeWidth="3" fill="none" /></svg></Task>
        <Task $open $w={59} aria-label="FxPro"><svg width="32" height="28" aria-hidden="true"><rect width="32" height="28" fill="#f01414" /></svg></Task>
        <Spacer />
        <Clock>9:20 PM</Clock>
        <Peek aria-label="Show desktop" />
      </Taskbar>
    </Page>
  );
}
